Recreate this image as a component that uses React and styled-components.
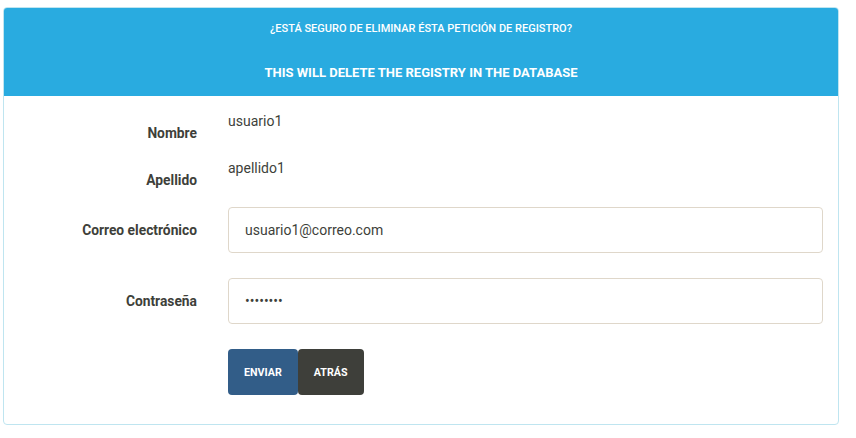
import styled, {createGlobalStyle} from "styled-components";

const GlobalStyle = createGlobalStyle`
  body {
    margin: 0;
    background: #ffffff;
    font-family: Roboto, "Liberation Sans", sans-serif;
  }
`;

const Page = styled.div`
  padding: 7px 17px 12px 3px;
`;

const Panel = styled.section`
  border: 1px solid #bfe5f0;
  border-radius: 4px;
  background: #ffffff;
  overflow: hidden;
`;

const Heading = styled.header`
  background: #29abe0;
  color: #ffffff;
  height: 88px;
  display: flex;
  flex-direction: column;
  align-items: center;
  text-transform: uppercase;
`;

const Question = styled.p`
  margin: 14px 0 0;
  font-size: 11px;
  font-weight: 500;
  line-height: 14px;
`;

const Warning = styled.h4`
  margin: 29px 0 0;
  font-size: 13px;
  font-weight: 700;
  line-height: 16px;
`;

const Body = styled.form`
  padding: 15px 15px 29px 0;
`;

const Row = styled.div`
  display: grid;
  grid-template-columns: 193px 1fr;
  column-gap: 31px;
  align-items: ${({$static}) => ($static ? "start" : "center")};
  margin-bottom: ${({$gap}) => $gap}px;
  &:last-child {
    margin-bottom: 0;
  }
`;

const Label = styled.label`
  text-align: right;
  font-size: 13.8px;
  font-weight: 700;
  color: #3e3f3a;
  line-height: 20px;
  padding-top: ${({$static}) => ($static ? "12px" : "0")};
`;

const Value = styled.p`
  margin: 0;
  font-size: 14px;
  color: #3e3f3a;
  line-height: 20px;
`;

const Input = styled.input`
  box-sizing: border-box;
  width: 100%;
  height: 46px;
  padding: 0 16px;
  border: 1px solid #dfd7ca;
  border-radius: 4px;
  font-family: Roboto, "Liberation Sans", sans-serif;
  font-size: 14px;
  color: #3e3f3a;
  background: #ffffff;
  outline: none;
`;

const Actions = styled.div`
  display: flex;
`;

const Button = styled.button`
  height: 46px;
  padding: 0 16px;
  border: none;
  border-radius: 4px;
  font-family: Roboto, "Liberation Sans", sans-serif;
  font-size: 10.7px;
  font-weight: 700;
  text-transform: uppercase;
  color: #ffffff;
  background: ${({$tone}) => ($tone === "primary" ? "#325d88" : "#3e3f3a")};
  cursor: pointer;
`;

const App = () => {
    return (
        <Page>
            <GlobalStyle/>
            <Panel>
                <Heading>
                    <Question>¿Está seguro de eliminar ésta petición de registro?</Question>
                    <Warning>This will delete the registry in the database</Warning>
                </Heading>
                <Body onSubmit={(e) => e.preventDefault()}>
                    <Row $static $gap={15}>
                        <Label $static>Nombre</Label>
                        <Value>usuario1</Value>
                    </Row>
                    <Row $static $gap={17}>
                        <Label $static>Apellido</Label>
                        <Value>apellido1</Value>
                    </Row>
                    <Row $gap={25}>
                        <Label>Correo electrónico</Label>
                        <Input type="email" defaultValue="usuario1@correo.com" readOnly/>
                    </Row>
                    <Row $gap={25}>
                        <Label>Contraseña</Label>
                        <Input type="password" defaultValue="usuario1" readOnly/>
                    </Row>
                    <Row $gap={0}>
                        <span/>
                        <Actions>
                            <Button $tone="primary" type="submit">Enviar</Button>
                            <Button type="button">Atrás</Button>
                        </Actions>
                    </Row>
                </Body>
            </Panel>
        </Page>
    );
};

export default App;
